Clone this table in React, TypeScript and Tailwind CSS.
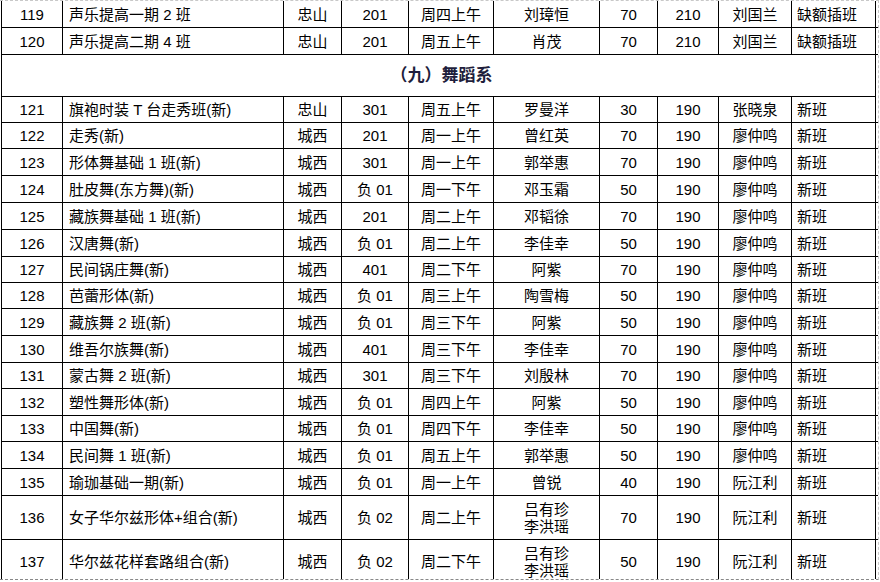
type Row = {
  no: string;
  name: string;
  campus: string;
  room: string;
  time: string;
  teacher: string[];
  count: string;
  fee: string;
  head: string;
  note: string;
  h: string;
};

const cols = [
  'w-[61px] justify-center',
  'w-[221px] justify-start pl-[6px]',
  'w-[58px] justify-center',
  'w-[67px] justify-center',
  'w-[85px] justify-center',
  'w-[106px] justify-center',
  'w-[58px] justify-center',
  'w-[61px] justify-center',
  'w-[73px] justify-center',
  'w-[84px] justify-start pl-[5px]',
];

const r = (
  no: string,
  name: string,
  campus: string,
  room: string,
  time: string,
  teacher: string[],
  count: string,
  fee: string,
  head: string,
  note: string,
  h: string,
): Row => ({ no, name, campus, room, time, teacher, count, fee, head, note, h });

const top: Row[] = [
  r('119', '声乐提高一期 2 班', '忠山', '201', '周四上午', ['刘璋恒'], '70', '210', '刘国兰', '缺额插班', 'h-[27px]'),
  r('120', '声乐提高二期 4 班', '忠山', '201', '周五上午', ['肖茂'], '70', '210', '刘国兰', '缺额插班', 'h-[27px]'),
];

const dance: Row[] = [
  r('121', '旗袍时装 T 台走秀班(新)', '忠山', '301', '周五上午', ['罗曼洋'], '30', '190', '张晓泉', '新班', 'h-[26px]'),
  r('122', '走秀(新)', '城西', '201', '周一上午', ['曾红英'], '70', '190', '廖仲鸣', '新班', 'h-[26px]'),
  r('123', '形体舞基础 1 班(新)', '城西', '301', '周一上午', ['郭举惠'], '70', '190', '廖仲鸣', '新班', 'h-[27px]'),
  r('124', '肚皮舞(东方舞)(新)', '城西', '负 01', '周一下午', ['邓玉霜'], '50', '190', '廖仲鸣', '新班', 'h-[27px]'),
  r('125', '藏族舞基础 1 班(新)', '城西', '201', '周二上午', ['邓韬徐'], '70', '190', '廖仲鸣', '新班', 'h-[27px]'),
  r('126', '汉唐舞(新)', '城西', '负 01', '周二上午', ['李佳幸'], '50', '190', '廖仲鸣', '新班', 'h-[27px]'),
  r('127', '民间锅庄舞(新)', '城西', '401', '周二下午', ['阿紫'], '70', '190', '廖仲鸣', '新班', 'h-[26px]'),
  r('128', '芭蕾形体(新)', '城西', '负 01', '周三上午', ['陶雪梅'], '50', '190', '廖仲鸣', '新班', 'h-[26px]'),
  r('129', '藏族舞 2 班(新)', '城西', '负 01', '周三下午', ['阿紫'], '50', '190', '廖仲鸣', '新班', 'h-[27px]'),
  r('130', '维吾尔族舞(新)', '城西', '401', '周三下午', ['李佳幸'], '70', '190', '廖仲鸣', '新班', 'h-[27px]'),
  r('131', '蒙古舞 2 班(新)', '城西', '301', '周三下午', ['刘殷林'], '70', '190', '廖仲鸣', '新班', 'h-[26px]'),
  r('132', '塑性舞形体(新)', '城西', '负 01', '周四上午', ['阿紫'], '50', '190', '廖仲鸣', '新班', 'h-[27px]'),
  r('133', '中国舞(新)', '城西', '负 01', '周四下午', ['李佳幸'], '50', '190', '廖仲鸣', '新班', 'h-[26px]'),
  r('134', '民间舞 1 班(新)', '城西', '负 01', '周五上午', ['郭举惠'], '50', '190', '廖仲鸣', '新班', 'h-[27px]'),
  r('135', '瑜珈基础一期(新)', '城西', '负 01', '周一上午', ['曾锐'], '40', '190', '阮江利', '新班', 'h-[27px]'),
  r('136', '女子华尔兹形体+组合(新)', '城西', '负 02', '周二上午', ['吕有珍', '李洪瑶'], '70', '190', '阮江利', '新班', 'h-[44px]'),
  r('137', '华尔兹花样套路组合(新)', '城西', '负 02', '周二下午', ['吕有珍', '李洪瑶'], '50', '190', '阮江利', '新班', 'h-[44px]'),
];

function TableRow({ row }: { row: Row }) {
  const cells = [row.no, row.name, row.campus, row.room, row.time, null, row.count, row.fee, row.head, row.note];
  return (
    <div className={`flex shrink-0 border-b border-l border-black ${row.h}`}>
      {cells.map((c, i) => (
        <div key={i} className={`flex items-center border-r border-black ${cols[i]}`}>
          {c === null ? (
            <div className="flex flex-col items-center leading-[17px]">
              {row.teacher.map((t) => (
                <span key={t}>{t}</span>
              ))}
            </div>
          ) : (
            <span className="whitespace-pre">{c}</span>
          )}
        </div>
      ))}
    </div>
  );
}

export default function App() {
  return (
    <div className="h-[582px] w-[880px] overflow-hidden bg-white">
      <div
        className="flex h-[580px] w-[879px] flex-col overflow-hidden border-t border-r border-b border-t-[#c8c8c8] border-r-[#c8c8c8] border-b-[#888888] border-dashed border-b-dotted pl-px text-[15px] leading-[17px] text-black"
        style={{ fontFamily: '"Liberation Sans", "Noto Sans CJK SC", sans-serif' }}
      >
        {top.map((row) => (
          <TableRow key={row.no} row={row} />
        ))}
        <div className="flex h-[42px] w-[875px] shrink-0 items-center justify-center border-b border-l border-r border-black pl-[6px]">
          <span className="text-[17px] font-bold text-[#1e1e3c]">（九）舞蹈系</span>
        </div>
        {dance.map((row) => (
          <TableRow key={row.no} row={row} />
        ))}
      </div>
    </div>
  );
}
